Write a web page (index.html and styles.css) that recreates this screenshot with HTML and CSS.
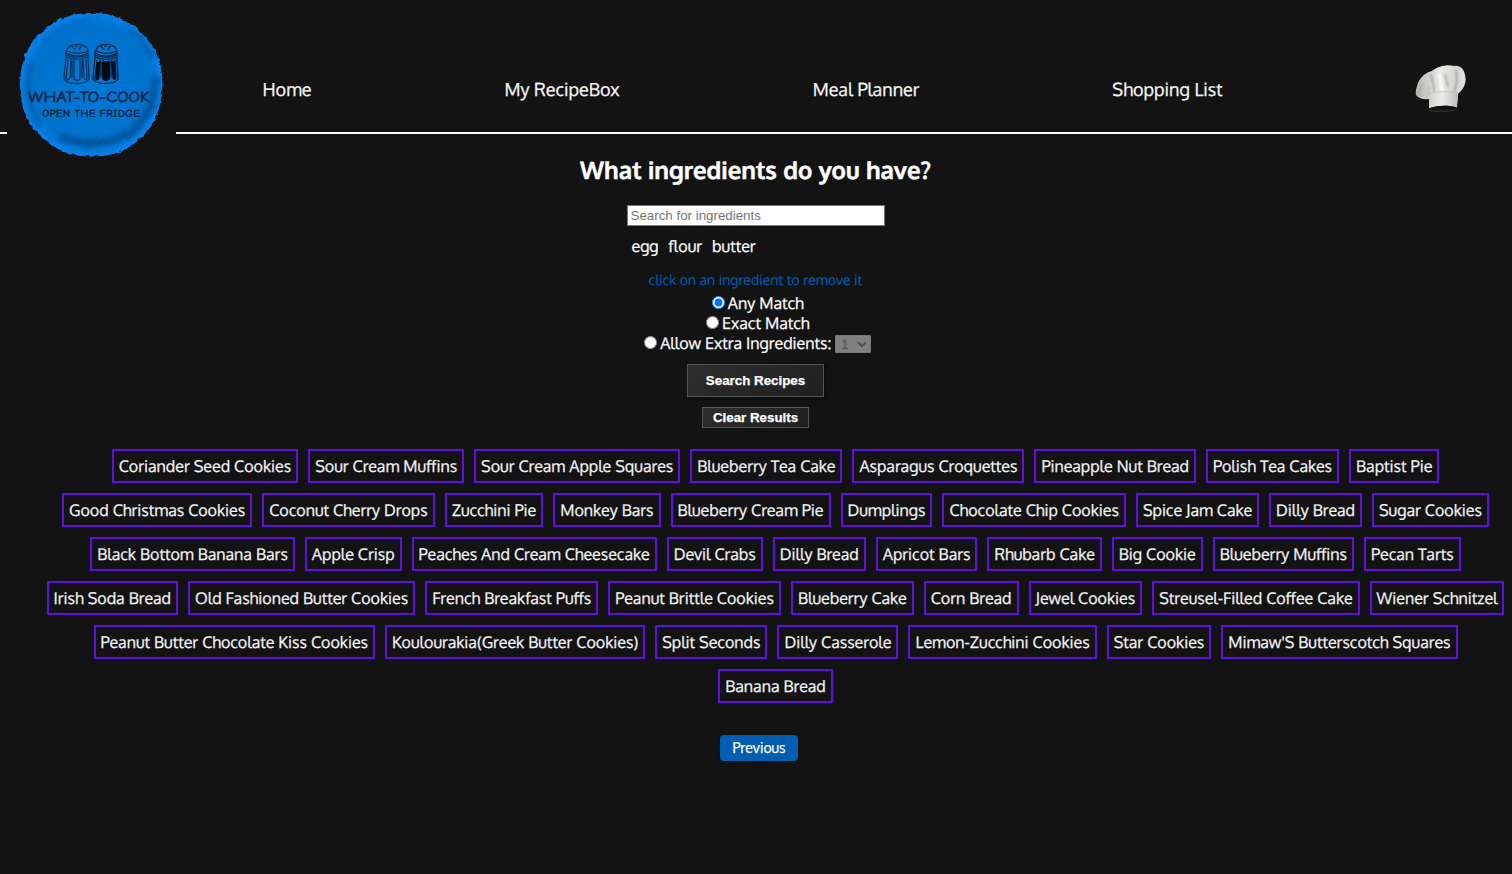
FILE: index.html
```
<!DOCTYPE html>
<html lang="en">
<head>
<meta charset="utf-8">
<title>What To Cook</title>
<link rel="stylesheet" href="styles.css">
</head>
<body>
<header class="header">
  <a class="logo">
    <svg width="169" height="169" viewBox="0 0 169 169">
      <defs>
        <filter id="rough" x="-5%" y="-5%" width="110%" height="110%">
          <feTurbulence type="fractalNoise" baseFrequency="0.2" numOctaves="2" seed="4" result="n"/>
          <feDisplacementMap in="SourceGraphic" in2="n" scale="4" xChannelSelector="R" yChannelSelector="G" result="d"/>
          <feGaussianBlur in="d" stdDeviation=".5"/>
        </filter>
        <filter id="soft" x="-20%" y="-20%" width="140%" height="140%"><feGaussianBlur stdDeviation="2.6"/></filter>
        <radialGradient id="paint">
          <stop offset="0" stop-color="#0678d6"/><stop offset=".8" stop-color="#0472cc"/><stop offset=".93" stop-color="#0679da"/><stop offset="1" stop-color="#0780ec"/>
        </radialGradient>
      </defs>
      <g filter="url(#rough)">
        <path fill="url(#paint)" d="M84 13C103 12 119 19 133 31C148 44 155.500 63 155.500 84C154.500 107 149 123 136 136C121 151 104 156.500 85 156.500C65 156.500 50 151 35 138C20 124 13 106 13 85C13 63 20 45 35 32C49 19 64 13 84 13Z"/>
        <g fill="none" stroke="#064b8b" filter="url(#soft)">
          <path d="M148 76C150 104 137 125 118 136C98 145 70 145 53 136" stroke-width="7" opacity=".8"/>
          <path d="M121 30C133 37 141 46 146 60M25 61C18 84 21 110 33 126" stroke-width="5" opacity=".55"/>
          <path d="M35 46C46 31 64 23 82 21" stroke-width="3" opacity=".35"/>
        </g>
      </g>
      <g fill="none" stroke="#092744" stroke-width="1.1" stroke-linecap="round">
        <path d="M60 51C60 42 80 42 81 51M60 51C67 54 74 54 81 51M59 53C66 57 75 57 81 53M59 51V57C66 60 75 60 81 57V51M59 55C66 58 75 58 81 55"/>
        <path d="M59 58C58 67 57 74 57 79C60 85 79 85 82 79C82 73 81 65 81 58M61 60L59 78Q61 82 63 78L64 60M67 60V79Q70 82 73 79V60M76 60L77 78Q79 81 80 78L79 60M65 61V77M75 61V77"/>
        <path d="M65 47h1M69 46h1M73 47h1M67 49h1M72 49h1" stroke-width="1.4"/>
      </g>
      <g fill="none" stroke="#061c31" stroke-width="1.2" stroke-linecap="round">
        <path d="M89 51C89 42 109 42 110 51M89 51C96 54 103 54 110 51M88 53C95 57 104 57 110 53M88 51V57C95 60 104 60 110 57V51M88 55C95 58 104 58 110 55"/>
        <path d="M88 58C87 67 86 74 86 79C89 85 108 85 111 79C111 73 110 65 110 58M90 60L88 78Q90 82 92 78L93 60M96 60V79Q99 82 102 79V60M105 60L106 78Q108 81 109 78L108 60M94 61V77M104 61V77"/>
        <path d="M94 47h1M98 46h1M102 47h1M96 49h1M101 49h1" stroke-width="1.4"/>
        <path fill="#000d18" stroke="none" d="M90 62H93L92 78Q90 81 88 78ZM95 62Q99 60 103 62V78Q99 82 95 78ZM105 62L108 61L109 78Q107 81 106 78Z"/>
      </g>
      <text class="logo-title" x="21" y="102" textLength="122" lengthAdjust="spacingAndGlyphs">WHAT-TO-COOK</text>
      <text class="logo-sub" x="35" y="117" textLength="98" lengthAdjust="spacingAndGlyphs">OPEN THE FRIDGE</text>
    </svg>
  </a>
  <nav class="nav">
    <a>Home</a>
    <a>My RecipeBox</a>
    <a>Meal Planner</a>
    <a>Shopping List</a>
  </nav>
  <svg class="chef" width="54" height="50" viewBox="0 0 54 50">
    <defs>
      <linearGradient id="hat" x1="0" y1="0" x2="1" y2="0"><stop offset="0" stop-color="#b5b5b1"/><stop offset=".3" stop-color="#d7d6d3"/><stop offset=".5" stop-color="#e8e8e6"/><stop offset=".8" stop-color="#d4d4d2"/><stop offset="1" stop-color="#e4e4e2"/></linearGradient>
      <linearGradient id="band" x1="0" y1="0" x2="1" y2="0"><stop offset="0" stop-color="#d0d0cd"/><stop offset=".45" stop-color="#ececea"/><stop offset="1" stop-color="#bcbcb9"/></linearGradient>
      <filter id="fold" x="-20%" y="-20%" width="140%" height="140%"><feGaussianBlur stdDeviation="1"/></filter>
    </defs>
    <path fill="url(#hat)" d="M14 34C8 35 3 33 1 30C0 26 2 21 3 18C6 11 12 7 17 6C23 1 33 -1 39 1C45 0 49 4 50 10C52 17 49 24 43 29L42 40C34 37 22 38 14 42Z"/>
    <g fill="none" stroke="#777773" filter="url(#fold)">
      <path d="M16 9C17 15 19 20 19 27M41 5C43 12 42 22 38 29M30 9L33 22" stroke-width="1.6" opacity=".6"/>
      <path d="M8 18C4 25 4 28 3 31M14 21L13 32" stroke-width="1.5" opacity=".35"/>
      <path d="M24 8C25 15 27 22 27 28" stroke="#fff" stroke-width="3" opacity=".8"/>
    </g>
    <path fill="url(#band)" d="M14 29C22 26 34 26 43 28L42 42.500C33 40 22 40 14 43.500Z"/>
    <path fill="none" stroke="#aaaaa6" stroke-width=".5" d="M14 29C22 26 34 26 43 28"/>
    <path fill="#101010" d="M14 43.500C22 40 34 40 42 42.500C41 45 35 46 29 46C23 46 15 47 14 43.500Z"/>
    <path fill="none" stroke="#555" stroke-width=".6" d="M14 44.500C16 47 23 46 29 46C35 46 41 45 42 43"/>
  </svg>
</header>
<main class="main">
  <h1 class="title">What ingredients do you have?</h1>
  <input class="search" placeholder="Search for ingredients">
  <div class="chosen"><span>egg</span><span>flour</span><span>butter</span></div>
  <p class="hint">click on an ingredient to remove it</p>
  <div class="options">
    <label class="option"><input type="radio" name="match" checked>Any Match</label>
    <label class="option"><input type="radio" name="match">Exact Match</label>
    <label class="option"><input type="radio" name="match">Allow Extra Ingredients:<span class="amount">1<svg width="10" height="7" viewBox="0 0 10 7"><path d="M1 1.2L5 5.2L9 1.2" fill="none" stroke="#4c4c4c" stroke-width="1.7"/></svg></span></label>
  </div>
  <button class="btn btn-search">Search Recipes</button>
  <button class="btn btn-clear">Clear Results</button>
</main>
<section class="results">
  <div class="row"><a class="tag">Coriander Seed Cookies</a><a class="tag">Sour Cream Muffins</a><a class="tag">Sour Cream Apple Squares</a><a class="tag">Blueberry Tea Cake</a><a class="tag">Asparagus Croquettes</a><a class="tag">Pineapple Nut Bread</a><a class="tag">Polish Tea Cakes</a><a class="tag">Baptist Pie</a></div>
  <div class="row"><a class="tag">Good Christmas Cookies</a><a class="tag">Coconut Cherry Drops</a><a class="tag">Zucchini Pie</a><a class="tag">Monkey Bars</a><a class="tag">Blueberry Cream Pie</a><a class="tag">Dumplings</a><a class="tag">Chocolate Chip Cookies</a><a class="tag">Spice Jam Cake</a><a class="tag">Dilly Bread</a><a class="tag">Sugar Cookies</a></div>
  <div class="row"><a class="tag">Black Bottom Banana Bars</a><a class="tag">Apple Crisp</a><a class="tag">Peaches And Cream Cheesecake</a><a class="tag">Devil Crabs</a><a class="tag">Dilly Bread</a><a class="tag">Apricot Bars</a><a class="tag">Rhubarb Cake</a><a class="tag">Big Cookie</a><a class="tag">Blueberry Muffins</a><a class="tag">Pecan Tarts</a></div>
  <div class="row"><a class="tag">Irish Soda Bread</a><a class="tag">Old Fashioned Butter Cookies</a><a class="tag">French Breakfast Puffs</a><a class="tag">Peanut Brittle Cookies</a><a class="tag">Blueberry Cake</a><a class="tag">Corn Bread</a><a class="tag">Jewel Cookies</a><a class="tag">Streusel-Filled Coffee Cake</a><a class="tag">Wiener Schnitzel</a></div>
  <div class="row"><a class="tag">Peanut Butter Chocolate Kiss Cookies</a><a class="tag">Koulourakia(Greek Butter Cookies)</a><a class="tag">Split Seconds</a><a class="tag">Dilly Casserole</a><a class="tag">Lemon-Zucchini Cookies</a><a class="tag">Star Cookies</a><a class="tag">Mimaw'S Butterscotch Squares</a></div>
  <div class="row"><a class="tag">Banana Bread</a></div>
</section>
<div class="pager"><button class="previous">Previous</button></div>
</body>
</html>
```
FILE: styles.css
```
* { box-sizing: border-box; }
body {
  margin: 0;
  background: #131313;
  color: #fff;
  font-family: Oxygen, "Noto Sans", "Open Sans", sans-serif;
  font-size: 16px;
  line-height: 20px;
  text-rendering: geometricPrecision;
  -webkit-text-stroke: .25px;
}
.header {
  height: 134px;
  border-bottom: 2px solid #fff;
  display: flex;
  align-items: flex-start;
  padding-left: 7px;
}
.logo { width: 169px; height: 169px; background: #131313; flex: none; }
.logo svg, .chef { display: block; }
.logo-title, .logo-sub { font-family: "Comic Neue", Lato, sans-serif; fill: #082b50; }
.logo-title { font-size: 15.5px; font-weight: 500; stroke: #082b50; stroke-width: .7px; }
.logo-sub { font-size: 11px; font-weight: 700; fill: #061a30; }
.nav {
  width: 960px;
  margin: 78px 0 0 86.5px;
  display: flex;
  justify-content: space-between;
  font-size: 18px;
  line-height: 24px;
  color: #f6f6f6;
  flex: none;
}
.chef { margin: 65px 0 0 192px; flex: none; }
.main { display: flex; flex-direction: column; align-items: center; padding-right: 1px; }
.title { margin: 20px 0 0; font-size: 24px; line-height: 32px; font-weight: 700; -webkit-text-stroke: .5px; }
.search {
  width: 258px;
  height: 21px;
  margin: 19px 0 0 1px;
  padding: 1px 2px 1px 2.5px;
  border: 1px solid #767676;
  background: #fff;
  font: 13.333px "Liberation Sans", sans-serif;
}
.search::placeholder { color: #757575; -webkit-text-stroke: 0; }
.chosen { width: 248px; display: flex; gap: 10px; margin-top: 10px; }
.hint { margin: 15px 0 0; font-size: 14px; line-height: 20px; color: #005daf; -webkit-text-stroke: .1px; }
.options { margin-top: 2px; display: flex; flex-direction: column; align-items: center; }
.option { display: flex; height: 20px; margin-left: 4.5px; white-space: nowrap; }
.option input { width: 13px; height: 13px; margin: 3px 3px 0 0; }
.amount {
  width: 36px;
  height: 18px;
  margin: 2px 0 0 4px;
  padding: 0 3px 0 5px;
  display: flex;
  align-items: center;
  justify-content: space-between;
  border: 1px solid #777;
  border-radius: 1px;
  background: #808080;
  color: #555;
  font: 13.333px "Liberation Sans", sans-serif;
}
.btn {
  padding: 0;
  border: 1px solid #555;
  background: linear-gradient(145deg, #2d2d2d, #202020);
  color: #fff;
  font: bold 13.333px "Liberation Sans", sans-serif;
}
.btn-search { width: 137px; height: 33px; margin-top: 11px; box-shadow: 2px 2px 3px #0c0c0c; }
.btn-clear { width: 107px; height: 21px; margin-top: 10px; }
.results { margin: 21px 1px 0 40px; display: flex; flex-direction: column; gap: 10px; }
.row { display: flex; justify-content: center; gap: 10px; }
.tag {
  height: 34px;
  flex: none;
  border: 2px solid #5f0fe0;
  padding: 5px;
  line-height: 20px;
  color: #f4f4f4;
  white-space: nowrap;
}
.pager { display: flex; justify-content: center; margin: 32px 0 0 6px; }
.previous {
  width: 78px;
  height: 26px;
  padding: 0;
  border: 0;
  border-radius: 4px;
  background: #005daf;
  color: #fff;
  font: 14px/24px Oxygen, "Noto Sans", sans-serif;
  box-shadow: 0 1px 3px #0a0a0a;
}
```
